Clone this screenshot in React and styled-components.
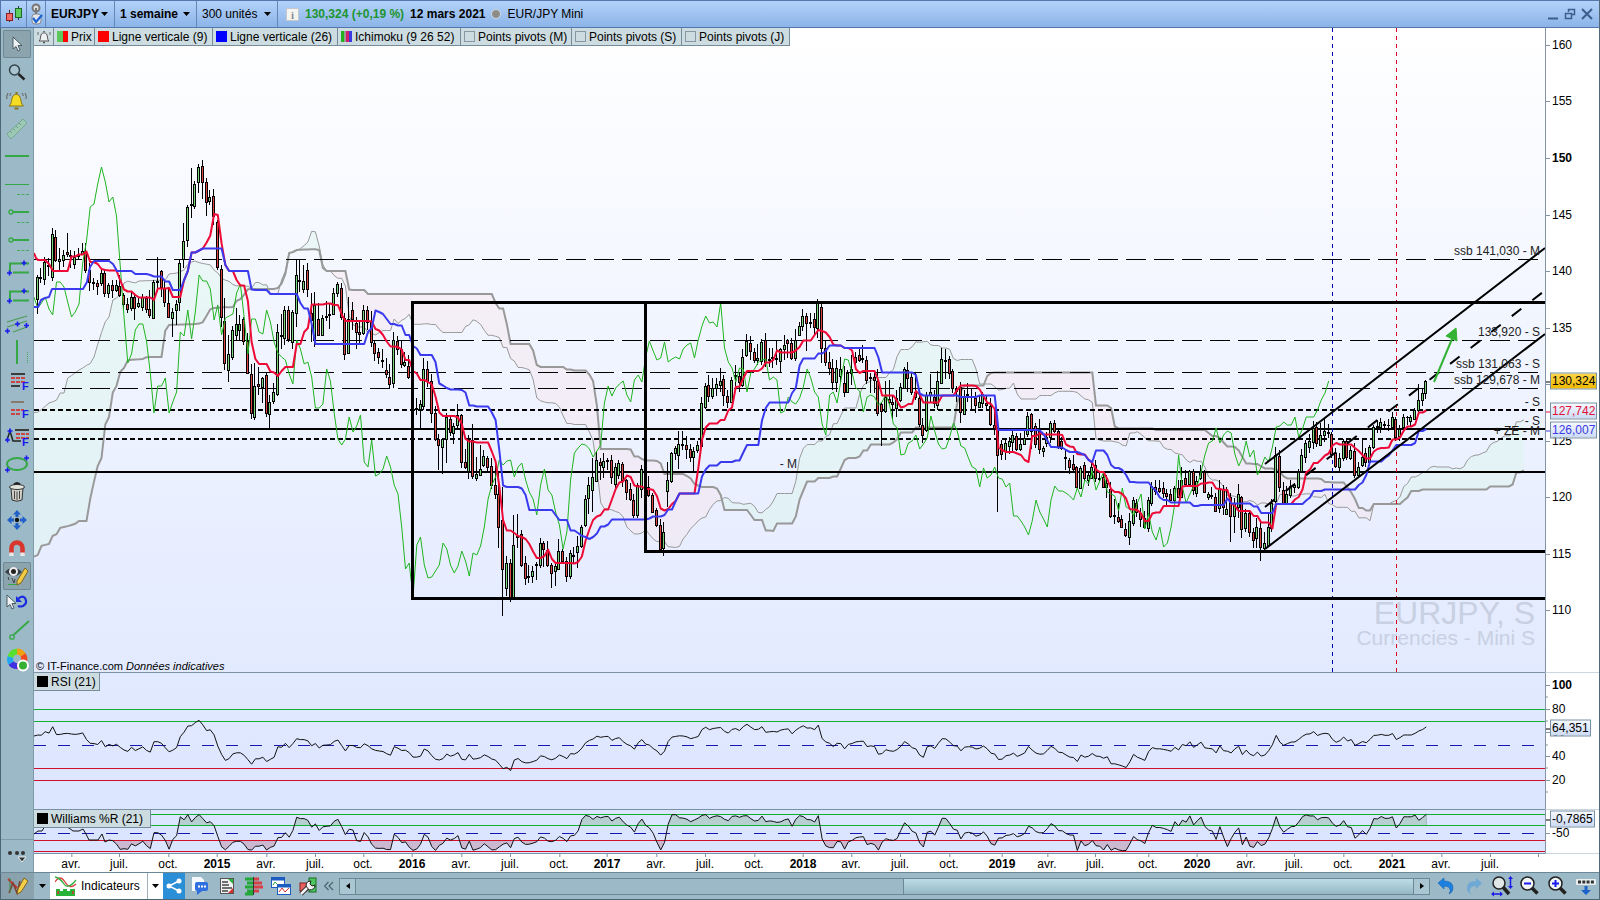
import React from 'react'
import styled, { createGlobalStyle, css } from 'styled-components'

// weekly candles: open high low close, as y positions on the price panel
const WEEKS = `
299 275 314 277|278 268 283 277|279 257 285 262|265 258 276 266|277 228 281 234|237 230 262 260|261 248 271 259|260 250 267 255|252 233 257 254|255 250 268 256
264 251 269 257|256 248 260 255|254 243 255 251|251 243 273 270|270 263 291 282|282 278 290 283|283 280 295 286|283 270 286 273|273 270 297 293|293 283 298 285
285 280 298 290|290 280 292 285|286 275 297 295|295 293 309 304|304 298 313 309|308 292 311 297|297 294 320 308|306 297 308 303|307 294 311 297|298 296 313 309
309 290 318 315|318 280 319 282|281 257 292 282|271 270 297 287|288 280 307 302|303 287 317 317|318 308 337 312|310 300 325 304|302 260 311 263|259 223 268 241
240 205 247 207|205 168 218 204|206 181 209 184|182 164 193 167|166 160 199 182|182 178 216 202|201 190 205 197|196 189 225 216|222 220 270 267|269 265 327 317
321 298 370 363|370 335 382 354|357 326 360 330|335 308 341 324|330 315 340 324|319 317 345 341|341 333 374 373|374 364 419 413|417 363 420 386|384 367 395 386
387 377 403 378|375 373 417 413|414 395 428 402|401 383 404 392|394 324 396 332|335 314 349 336|338 306 345 310|310 306 342 339|342 310 349 312|313 260 327 275
280 260 292 281|289 265 293 281|270 263 297 289|313 293 342 320|340 292 347 305|319 303 336 335|335 315 336 318|317 301 321 316|315 303 329 314|314 288 315 293
293 282 297 284|288 283 320 317|318 313 360 354|353 297 354 319|310 302 330 319|323 317 349 332|332 322 344 334|333 305 335 310|310 306 330 322|321 311 347 342
343 341 361 353|352 348 364 357|361 349 368 360|370 358 378 374|377 364 388 384|383 332 388 340|341 336 355 349|349 341 368 364|365 352 367 362|366 355 379 377
378 365 410 408|409 398 415 408|409 400 428 404|406 358 410 369|369 361 387 381|381 374 423 413|413 406 441 439|439 434 470 445|447 438 474 439|439 413 463 417
419 416 436 432|433 423 444 426|425 404 428 415|415 414 468 462|462 449 469 467|471 435 479 440|440 424 479 476|478 457 481 474|475 445 476 469|465 450 467 456
458 456 472 467|466 458 489 485|485 462 499 494|494 472 548 527|520 487 616 569|588 556 596 563|563 559 602 597|597 515 598 545|536 514 548 537|534 530 567 565
563 556 585 578|576 565 583 577|576 566 583 571|564 562 580 565|565 538 568 543|543 541 567 549|550 541 567 565|565 563 588 573|571 563 586 566|569 539 570 551
551 549 563 561|561 557 582 576|576 550 579 553|556 547 563 555|552 536 568 546|546 525 548 527|525 495 527 499|498 477 514 485|490 458 512 477|481 451 482 460
462 458 480 465|467 453 478 461|461 458 470 460|460 455 484 477|484 463 489 467|475 460 479 463|464 462 487 480|480 479 500 492|489 483 501 499|500 494 518 515
515 483 518 485|489 465 498 469|470 468 500 490|487 476 497 495|495 493 513 512|510 508 527 525|525 519 552 549|548 522 556 532|491 462 507 480|481 452 483 453
453 446 460 448|455 431 469 444|444 431 450 445|445 436 459 449|449 444 462 457|457 447 472 451|450 441 453 445|446 397 447 403|407 383 409 386|385 375 402 396
396 378 399 388|388 378 396 384|385 368 392 381|379 375 406 395|396 390 408 402|402 377 403 380|376 365 388 375|376 373 392 382|385 349 387 357|355 334 357 341
343 336 360 351|352 348 363 360|360 344 365 358|361 339 365 342|340 333 367 362|360 348 367 359|358 348 368 357|358 341 365 359|361 348 372 349|349 335 360 345
340 339 358 343|343 338 360 358|358 329 361 340|335 322 336 326|326 309 331 316|316 313 351 323|323 313 328 322|319 313 334 327|328 299 338 303|307 304 363 348
348 341 366 362|362 352 375 368|368 359 390 382|382 360 392 368|376 357 383 369|383 366 397 392|392 370 393 373|373 355 385 369|357 352 369 362|355 349 362 360
358 345 363 359|360 356 384 380|378 373 393 377|377 370 393 380|381 369 416 413|404 402 446 411|411 381 413 397|399 380 405 402|402 395 420 404|408 390 417 398
400 383 402 387|388 367 389 369|370 362 392 378|377 373 395 392|392 372 400 397|398 393 427 424|425 418 443 435|430 392 432 395|395 374 403 392|397 390 408 403
405 371 410 381|383 348 384 359|361 349 379 360|359 356 379 373|371 369 393 388|388 386 402 391|387 382 423 412|414 390 415 397|394 383 402 395|396 388 410 397
398 392 413 405|407 395 408 402|403 392 408 394|403 395 410 405|406 398 426 424|425 408 435 428|428 427 512 455|444 440 460 454|451 438 460 443|446 437 454 441
442 431 452 435|436 433 451 449|449 433 451 444|444 430 445 438|434 412 437 416|414 413 449 431|426 423 448 444|431 419 454 449|451 446 457 448|443 432 447 437
437 421 443 423|423 420 433 431|431 430 449 446|441 437 450 448|457 450 470 458|460 458 474 467|464 455 473 469|467 466 488 487|488 466 489 468|465 462 481 478
480 471 486 475|478 462 479 467|465 460 482 478|478 473 481 479|477 474 488 487|487 475 498 483|489 482 518 516|515 499 524 516|517 503 523 521|519 515 528 527
529 523 537 535|537 513 545 521|523 497 526 500|503 499 517 512|513 508 527 519|518 511 529 527|528 497 532 500|503 482 506 486|487 480 495 491|488 480 493 491
488 482 498 493|493 489 505 496|494 489 501 500|500 486 502 488|488 480 498 497|497 467 498 480|478 470 485 484|484 470 487 471|471 469 495 490|493 476 497 481
478 465 480 472|472 470 493 492|497 492 500 494|495 487 499 496|497 493 512 511|508 480 513 488|489 485 515 507|514 487 515 509|497 493 542 516|516 498 533 503
507 484 518 494|497 496 538 529|528 509 532 513|513 510 537 532|532 528 548 540|538 518 548 527|528 520 561 547|548 532 552 543|545 513 547 527|528 499 532 503
501 447 503 455|456 450 492 487|490 482 505 503|503 486 505 494|495 480 498 486|487 483 493 485|487 469 489 472|471 449 473 455|457 440 463 443|447 434 453 441
442 421 449 428|427 422 447 443|445 423 446 435|435 418 442 431|432 424 438 433|434 432 458 454|453 448 468 466|467 453 471 458|458 439 461 441|441 439 460 457
458 446 460 450|451 443 478 475|475 462 477 467|465 439 467 457|453 448 467 462|462 445 463 447|447 425 449 427|427 420 433 426|427 418 433 422|424 421 430 425
425 419 431 425|427 412 430 417|419 417 441 437|436 425 441 429|427 414 429 417|417 416 425 417|421 415 426 417|419 408 420 410|410 384 412 400|400 388 406 393
393 380 399 381`
  .trim()
  .split(/[|\n]/)
  .map(w => {
    const [o, h, l, c] = w.split(' ').map(Number)
    return { o, h, l, c }
  })

// history that starts before the first candle
const TENKAN_START = [[34, 253], [36, 258], [38, 260], [45, 260], [49, 264], [53, 271], [64, 271]]
const KIJUN_START = [[34, 307], [38, 307], [41, 300], [45, 298], [49, 297], [52, 289], [83, 289], [87, 282], [90, 267], [94, 261], [109, 261], [113, 264], [117, 271], [128, 271]]
const SSA_START = [[33, 413], [38, 412], [41, 410], [49, 403], [52, 402], [56, 401], [60, 393], [64, 393], [68, 377], [71, 376], [79, 370], [83, 368], [87, 365], [90, 364], [94, 357], [100, 337], [105, 322], [109, 317], [113, 299], [117, 298], [120, 295], [124, 283], [128, 281], [131, 282], [135, 283], [139, 281], [166, 280], [169, 274], [177, 273], [184, 270], [187, 265], [191, 262], [195, 261], [200, 263], [211, 265], [214, 270], [218, 273], [221, 278], [229, 282]]
const SSB_START = [[33, 557], [38, 555], [41, 546], [49, 544], [52, 536], [56, 535], [60, 528], [68, 526], [75, 524], [79, 521], [87, 521], [90, 500], [95, 477], [98, 465], [102, 457], [103, 440], [105, 425], [109, 417], [113, 391], [116, 388], [120, 372], [124, 368], [128, 360], [143, 359], [147, 357], [162, 357], [166, 325], [198, 324], [203, 322], [211, 308], [233, 307], [237, 300], [241, 299], [248, 289], [277, 289], [282, 283], [286, 272], [289, 253], [293, 252], [296, 250], [319, 249], [322, 267], [326, 271]]
const WILLIAMS_START = [[34, 834], [38, 831], [42, 831], [45, 826], [50, 822], [69, 828], [73, 831], [79, 831], [83, 829], [86, 834], [89, 840], [98, 840], [102, 834], [105, 842], [109, 840]]

const xOf = i => 37.7 + 3.753 * i
const range = (i, n) => {
  const part = WEEKS.slice(Math.max(0, i - n + 1), i + 1)
  return [Math.min(...part.map(w => w.h)), Math.max(...part.map(w => w.l))]
}
const mid = (i, n) => {
  const [top, bottom] = range(i, n)
  return (top + bottom) / 2
}
const valueAt = (pts, x) => {
  const k = Math.max(1, pts.findIndex(p => p[0] >= x))
  const [x0, y0] = pts[k - 1]
  const [x1, y1] = pts[k]
  return y0 + ((y1 - y0) * (x - x0)) / (x1 - x0)
}
const toPath = pts => 'M' + pts.map(p => `${p[0].toFixed(1)} ${p[1].toFixed(1)}`).join('L')

const weeks = WEEKS.map((w, i) => i)
const tenkan = [...TENKAN_START, ...weeks.slice(8).map(i => [xOf(i), mid(i, 9)])]
const kijun = [...KIJUN_START, ...weeks.slice(25).map(i => [xOf(i), mid(i, 26)])]
const chikou = weeks.slice(25).map(i => [xOf(i - 26), WEEKS[i].c])

const slots = Array.from({ length: WEEKS.length + 27 }, (_, k) => k - 1)
const ssa = slots.map(s => [xOf(s), s < 51 ? valueAt(SSA_START, xOf(s)) : (mid(s - 26, 9) + mid(s - 26, 26)) / 2])
const ssb = slots.map(s => [xOf(s), s < 77 ? valueAt(SSB_START, xOf(s)) : mid(s - 26, 52)])

// one polygon for each stretch where the same span is on top
const clouds = []
let top = [ssa[0]]
let low = [ssb[0]]
for (let k = 1; k < ssa.length; k++) {
  const before = ssb[k - 1][1] - ssa[k - 1][1]
  const now = ssb[k][1] - ssa[k][1]
  if (before !== 0 && before * now <= 0) {
    const t = before / (before - now)
    const cross = [ssa[k - 1][0] + 3.753 * t, ssa[k - 1][1] + (ssa[k][1] - ssa[k - 1][1]) * t]
    clouds.push({ up: before > 0, d: toPath([...top, cross, ...low.reverse()]) })
    top = [cross]
    low = [cross]
  }
  top.push(ssa[k])
  low.push(ssb[k])
  if (k === ssa.length - 1) clouds.push({ up: now > 0, d: toPath([...top, ...low.reverse()]) })
}

let gain = 6.4
let loss = 4.6
const rsi = weeks.map(i => {
  if (i > 0) {
    const move = WEEKS[i - 1].c - WEEKS[i].c
    gain = (gain * 20 + Math.max(move, 0)) / 21
    loss = (loss * 20 + Math.max(-move, 0)) / 21
  }
  return [xOf(i), 804 - (118.5 * gain) / (gain + loss)]
})
rsi.unshift([34, 736])

const williams = [
  ...WILLIAMS_START,
  ...weeks.slice(20).map(i => {
    const [hi, lo] = range(i, 21)
    return [xOf(i), 814 + (37 * (WEEKS[i].c - hi)) / (lo - hi)]
  })
]
const lastX = xOf(WEEKS.length - 1)

const stick = fn => weeks.map(i => fn(Math.round(xOf(i)) - 0.5, WEEKS[i])).join('')
const wicks = stick((x, w) => `M${x} ${w.h}V${w.l}`)
const bodies = stick((x, w) => `M${x} ${Math.min(w.o, w.c)}V${Math.max(w.o, w.c) + 1}`)
const fillOf = up => stick((x, w) => (w.c < w.o === up && Math.abs(w.c - w.o) > 1 ? `M${x} ${Math.min(w.o, w.c) + 1}V${Math.max(w.o, w.c)}` : ''))

const PRICES = [160, 155, 150, 145, 140, 135, 130, 125, 120, 115, 110]
const LEVELS = [
  { y: 251, text: 'ssb 141,030 - M' },
  { y: 332, text: '133,920 - S' },
  { y: 364, text: 'ssb 131,063 - S' },
  { y: 380, text: 'ssb 129,678 - M' },
  { y: 402, text: '- S' },
  { y: 421, text: '- S' },
  { y: 431, text: '+ ZE - M' },
  { y: 464, text: '- M', x: 797 }
]
const DATES = [
  [71, 'avr.'], [119, 'juil.'], [168, 'oct.'], [217, '2015'], [266, 'avr.'], [315, 'juil.'], [363, 'oct.'], [412, '2016'],
  [461, 'avr.'], [510, 'juil.'], [559, 'oct.'], [607, '2017'], [656, 'avr.'], [705, 'juil.'], [754, 'oct.'], [803, '2018'],
  [851, 'avr.'], [900, 'juil.'], [949, 'oct.'], [1002, '2019'], [1047, 'avr.'], [1095, 'juil.'], [1148, 'oct.'], [1197, '2020'],
  [1246, 'avr.'], [1294, 'juil.'], [1343, 'oct.'], [1392, '2021'], [1441, 'avr.'], [1490, 'juil.'], [1538, '']
]

const pct = (v, from, size) => `${((v - from) / size) * 100}%`

function Caret() {
  return (
    <CaretMark viewBox="0 0 7 4">
      <path d="M0 0h7L3.5 4z" />
    </CaretMark>
  )
}

function Picker({ label, value, bold, width }) {
  return (
    <PickerBox $width={width} $bold={bold}>
      <select aria-label={label} defaultValue={value}>
        <option>{value}</option>
      </select>
      <Caret />
    </PickerBox>
  )
}

const Plus = ({ x, y }) => <path d={`M${x - 2.5} ${y}h5M${x} ${y - 2.5}v5`} stroke="#1a1aee" strokeWidth="1.6" />
const Steps = () => (
  <>
    <path d="M26 9.500H7V18M10 18.500H26" stroke="#35a845" strokeWidth="2" />
    <Plus x={21} y={9} />
    <Plus x={6.5} y={19} />
  </>
)
const Ray = () => (
  <>
    <circle cx="8" cy="14" r="2" stroke="#35a845" strokeWidth="1.3" />
    <path d="M10 14H26" stroke="#35a845" strokeWidth="2" />
    <path d="M14 24.500H26" stroke="#4aa85c" strokeDasharray="3 1.500" />
  </>
)
const Letter = () => (
  <text x="19" y="24" fontSize="11" fontWeight="700" fill="#1a1aee" fontFamily="Liberation Sans, sans-serif">F</text>
)
const arrow = 'v12l3-2.500 2 4.500 2-1-2-4.500h4z'

const TOOLS = [
  ['Curseur', <path d={'M10 7' + arrow} fill="#eef2f4" stroke="#4b5a62" />],
  ['Zoom', <g><circle cx="11.500" cy="12" r="5" stroke="#33434b" strokeWidth="1.500" fill="#a9c4cf" /><path d="M15.500 16l6 5.500" stroke="#222" strokeWidth="2.400" /></g>],
  ['Alarme', <g><path d="M6 20c3-1.500 2-7 4-10 1.500-2 5-2 6.500 0 2 3 1 8.500 4 10z" fill="#f6dc22" stroke="#8a7418" /><path d="M11.500 22.500h4M13.500 6v2" stroke="#8a7418" strokeWidth="2" /><path d="M5 7q-2 3-1 6M8 7q-1.500 1.500-1 3M22 7q2 3 1 6M19 7q1.500 1.500 1 3" stroke="#555" strokeWidth=".9" /></g>],
  ['Règle', <g><path d="M4 20L20 5l4 4L8 25z" fill="#9cc8b4" stroke="#74a892" /><path d="M7 17l2 2M10 14.500l2 2M13 12l2 2M16 9l2 2" stroke="#6b9f8a" /></g>],
  ['Ligne', <path d="M2 14H26" stroke="#35a845" strokeWidth="2" />],
  ['Segment horizontal', <g><path d="M2 14.500H26" stroke="#35a845" /><path d="M14 24.500H26" stroke="#4aa85c" strokeDasharray="3 1.500" /></g>],
  ['Demi-droite', <Ray />],
  ['Demi-droite 2', <Ray />],
  ['Paliers', <Steps />],
  ['Paliers 2', <Steps />],
  ['Canal', <g><path d="M4 12L24 6M4 17L24 11M10 22L24 17" stroke="#4a9c56" strokeWidth="1.200" /><Plus x={4.5} y={21} /><Plus x={14.5} y={14} /><Plus x={23.5} y={15.5} /></g>],
  ['Ligne verticale', <g><path d="M14 2V26" stroke="#35a845" strokeWidth="2" /><path d="M24.500 14V26" stroke="#4aa85c" strokeDasharray="1 1" /></g>],
  ['Fibonacci', <g><path d="M8 8H22M8 20H17" stroke="#3c3c3c" strokeWidth="2" /><path d="M8 12H22M8 16H22" stroke="#cc4444" strokeWidth="2" strokeDasharray="4 1" /><Letter /></g>],
  ['Extension', <g><path d="M8 8H21" stroke="#857a6c" strokeWidth="2" /><path d="M8 16H21M8 20H18" stroke="#cc4444" strokeWidth="2" strokeDasharray="4 1" /><Letter /></g>],
  ['Projection', <g><path d="M12 8H26" stroke="#3c3c3c" strokeWidth="2" /><path d="M13 12H26M13 16H26" stroke="#cc4444" strokeWidth="2" strokeDasharray="4 1" /><path d="M4 18l3-9 3 10h8" stroke="#222" strokeWidth="1.500" /><Plus x={7} y={9} /><Plus x={4.5} y={18} /><Letter /></g>],
  ['Ellipse', <g><ellipse cx="14" cy="14" rx="10" ry="6" stroke="#35a845" strokeWidth="2" /><Plus x={23.5} y={8} /><Plus x={4.5} y={20} /></g>],
  ['Supprimer', <g><path d="M8 10l1 12q5 2.500 10 0l1-12z" fill="#cfcfc8" stroke="#333" /><ellipse cx="14" cy="9" rx="7.500" ry="2.500" fill="#e3e3dd" stroke="#333" /><path d="M11 6.500q3-3 6 0" stroke="#222" strokeWidth="1.800" /><path d="M11.500 13v8M14 13.500v8.500M16.500 13v8" stroke="#444" /></g>],
  ['Déplacer', <g><path d="M14 4l4 4.500h-2.500V11h-3V8.500H10zM14 24l4-4.500h-2.500V17h-3v2.500H10zM4 14l4.500-4v2.500H11v3H8.500V18zM24 14l-4.500-4v2.500H17v3h2.500V18z" fill="#2060c8" /><circle cx="14" cy="14" r="2.200" fill="#111" /></g>],
  ['Aimant', <g><path d="M8.500 20v-6a5.500 5.500 0 0 1 11 0v6" stroke="#d8352c" strokeWidth="4.500" /><path d="M8.500 18.500v3.500M19.500 18.500v3.500" stroke="#e8e8e8" strokeWidth="4.500" /></g>],
  ['Afficher les dessins', <g><path d="M2 10q8-9 17 0-8 8-17 0z" fill="#33404a" /><circle cx="10.500" cy="9.500" r="4.500" fill="#eee" /><circle cx="10.500" cy="9.500" r="2.500" fill="#222" /><path d="M5 15l1 3M9 16l2 5 1-4" stroke="#444" /><path d="M5 22.500h10" stroke="#35a845" /><path d="M22 6l3 3-7 12-4 2 0-4z" fill="#f3cb45" stroke="#7d6420" /></g>],
  ['Annuler la sélection', <g><path d={'M4 5' + arrow} fill="#eef2f4" stroke="#4b5a62" /><path d="M15 9q4-4 7-1 3 5-2 8-3 1-5 0" stroke="#1a2be0" strokeWidth="2.200" /><path d="M13 6v6h6z" fill="#1a2be0" /></g>],
  ['Segment', <g><circle cx="9" cy="19" r="2.200" stroke="#35a845" strokeWidth="1.300" /><path d="M10.500 17L26 3" stroke="#35a845" strokeWidth="1.800" /></g>],
  ['Couleur', (
    <g strokeWidth="6">
      <path d="M14 5.500a7 7 0 0 1 6 3.500" stroke="#f0a010" />
      <path d="M20 9a7 7 0 0 1 0 8" stroke="#f04a20" />
      <path d="M20 17a7 7 0 0 1-6 3" stroke="#e02080" />
      <path d="M14 20a7 7 0 0 1-6-3" stroke="#4030e0" />
      <path d="M8 17a7 7 0 0 1-.5-6" stroke="#20a8f0" />
      <path d="M7.500 11a7 7 0 0 1 6.500-5.500" stroke="#58e030" />
      <circle cx="20" cy="19.500" r="5" fill="#35b035" stroke="#fff" strokeWidth="2" />
    </g>
  )]
]

const BellIcon = () => (
  <svg width="14" height="14" viewBox="0 0 14 14" fill="none">
    <path d="M2 11c2-1 1-5 2.500-7 1-1.500 4-1.500 5 0C11 6 10 10 12 11z" fill="#eef2f3" stroke="#555" />
    <path d="M6 12.500h2M7 1v1" stroke="#555" strokeWidth="1.500" />
    <path d="M1 2v3M13 2v3" stroke="#666" />
  </svg>
)

const Lens = ({ sign }) => (
  <svg width="22" height="22" viewBox="0 0 22 22" fill="none">
    <path d="M12.500 12.500l6 6" stroke="#222" strokeWidth="3.500" />
    <circle cx="8.500" cy="8.500" r="6.500" fill="#f2f5f6" stroke="#222" strokeWidth="1.500" />
    <path d={sign} stroke="#1a1aee" strokeWidth="2" />
  </svg>
)

function PriceChart() {
  return (
    <Canvas viewBox="34 28 1511 644" preserveAspectRatio="none">
      {clouds.map((c, i) => <path key={i} d={c.d} fill={c.up ? 'rgba(215,246,228,.35)' : 'rgba(248,228,232,.4)'} />)}
      <path d={toPath(ssa)} stroke="#999" />
      <path d={toPath(ssb)} stroke="#999" strokeWidth="2" />
      <g shapeRendering="crispEdges" stroke="#000">
        <path d="M34 259.500H1539M34 340.500H1545M34 372.500H1545M34 388.500H1545" strokeDasharray="20 8" />
        <path d="M34 410H1545M34 439H1545" strokeWidth="2" strokeDasharray="5 3" />
        <path d="M34 429H1545M34 472H1545" strokeWidth="2" />
        <path d="M1332.500 28V672" stroke="#0000b8" strokeDasharray="4 4" />
        <path d="M1396.500 28V672" stroke="#d8001c" strokeDasharray="4 4" />
        <path d={wicks} />
        <path d={bodies} strokeWidth="3" />
        <path d={fillOf(true)} stroke="#7ad67a" />
        <path d={fillOf(false)} stroke="#dd4444" />
      </g>
      <path d={toPath(chikou)} stroke="#1fb51f" />
      <path d={toPath(tenkan)} stroke="#ee0a36" strokeWidth="2" strokeLinejoin="round" />
      <path d={toPath(kijun)} stroke="#3a3aee" strokeWidth="2" strokeLinejoin="round" />
      <path d="M1545 302.500H412.500V598.500H1545M645.500 302.500V551.500H1545" stroke="#000" strokeWidth="3" shapeRendering="crispEdges" />
      <path d="M1265 464L1545 248M1265 549L1545 334" stroke="#000" strokeWidth="2" />
      <path d="M1265 507L1543 292" stroke="#000" strokeWidth="2" strokeDasharray="12 14" />
      <path d="M1434 382L1452 339" stroke="#33b233" strokeWidth="2" />
      <path d="M1456 328L1446 336L1457 341Z" fill="#33b233" stroke="#33b233" />
    </Canvas>
  )
}

function RsiChart() {
  return (
    <Canvas viewBox="34 673 1511 136" preserveAspectRatio="none">
      <g shapeRendering="crispEdges">
        <path d="M34 709.500H1545M34 721.500H1545" stroke="#12b032" />
        <path d="M34 768.500H1545M34 780.500H1545" stroke="#d01028" />
        <path d="M34 745.500H1545" stroke="#1818b0" strokeDasharray="12 12" />
      </g>
      <path d={toPath(rsi)} stroke="#111" />
    </Canvas>
  )
}

function WilliamsChart() {
  const line = toPath(williams)
  return (
    <Canvas viewBox="34 810 1511 43" preserveAspectRatio="none">
      <clipPath id="over"><rect x="34" y="810" width="1511" height="15" /></clipPath>
      <clipPath id="under"><rect x="34" y="840" width="1511" height="13" /></clipPath>
      <path d={`${line}V825H34Z`} fill="rgba(130,175,140,.4)" clipPath="url(#over)" />
      <path d={`${line}V840H34Z`} fill="rgba(180,120,140,.4)" clipPath="url(#under)" />
      <g shapeRendering="crispEdges">
        <path d="M34 814.500H1545M34 825.500H1545" stroke="#12b032" />
        <path d="M34 840.500H1545M34 851.500H1545" stroke="#d01028" />
        <path d="M34 833.500H1545" stroke="#1818b0" strokeDasharray="12 12" />
      </g>
      <path d={line} stroke="#111" />
      <path d={`M${lastX} 815V825`} stroke="#9db8b8" />
    </Canvas>
  )
}

export default function App() {
  return (
    <Screen>
      <Global />
      <TitleBar>
        <TitleCell $width={26}>
          <svg width="18" height="20" viewBox="0 0 18 20">
            <path d="M4.500 6v12M13.500 2v14" stroke="#333" />
            <rect x="1.500" y="9.500" width="6" height="7" fill="#f06a6a" stroke="#8a2020" />
            <rect x="10.500" y="4.500" width="6" height="9" fill="#5ccc5c" stroke="#1c6a24" />
          </svg>
        </TitleCell>
        <TitleCell $width={19}>
          <svg width="14" height="22" viewBox="0 0 14 22" fill="none">
            <circle cx="7" cy="5" r="3.500" stroke="#777" strokeWidth="2" fill="#ddd" />
            <path d="M7 5v9" stroke="#777" strokeWidth="2" />
            <rect x="3" y="11" width="9" height="10" rx="3" fill="#dfe6ee" stroke="#888" />
            <path d="M4 15l3 4 6-7" stroke="#1c62d0" strokeWidth="2.200" />
          </svg>
        </TitleCell>
        <Picker label="Valeur" value="EURJPY" bold width={69} />
        <Picker label="Période" value="1 semaine" bold width={82} />
        <Picker label="Historique" value="300 unités" width={81} />
        <Quote>
          <Info>i</Info>
          <Change>130,324 (+0,19 %)</Change>
          <b>12 mars 2021</b>
          <Dot />
          <span>EUR/JPY Mini</span>
        </Quote>
        <WindowButtons>
          <button aria-label="Réduire"><svg viewBox="0 0 12 12"><path d="M1 10.500h10" strokeWidth="2" /></svg></button>
          <button aria-label="Restaurer"><svg viewBox="0 0 12 12"><path d="M4.500 4V1.500h6v5H8M1.500 5.500h6v5h-6z" strokeWidth="1.500" /></svg></button>
          <button aria-label="Fermer"><svg viewBox="0 0 12 12"><path d="M1 1l10 10M11 1L1 11" strokeWidth="2" /></svg></button>
        </WindowButtons>
      </TitleBar>

      <Body>
        <SideBar>
          <Tools>
            {TOOLS.map(([name, icon], i) => (
              <Tool key={name} aria-label={name} $active={i === 0 || i === 19}>
                <svg width="28" height="28" viewBox="0 0 28 28" fill="none">{icon}</svg>
              </Tool>
            ))}
          </Tools>
          <More aria-label="Plus d'outils">
            <svg width="20" height="14" viewBox="0 0 20 14" fill="#333">
              <circle cx="3" cy="4" r="2" /><circle cx="10" cy="4" r="2" /><circle cx="16" cy="4" r="2" />
              <path d="M11 8h8l-4 5z" stroke="#e6eef0" />
            </svg>
          </More>
        </SideBar>

        <Charts>
          <Panels>
            <Panel $share={645}>
              <Plot>
                <Watermark>
                  <big>EURJPY, S</big>
                  <span>Currencies - Mini S</span>
                </Watermark>
                <PriceChart />
                {LEVELS.map(l => (
                  <Level key={l.y} style={{ top: pct(l.y, 28, 644), right: pct(1545 - (l.x || 1540), 0, 1511) }}>{l.text}</Level>
                ))}
                <Legend>
                  <LegendItem $width={20}><BellIcon /></LegendItem>
                  <LegendItem $width={41}><Swatch $paint="linear-gradient(90deg, #5cc85c 50%, #f00 50%)" />Prix</LegendItem>
                  <LegendItem $width={118}><Swatch $paint="#f00" />Ligne verticale (9)</LegendItem>
                  <LegendItem $width={125}><Swatch $paint="#00f" />Ligne verticale (26)</LegendItem>
                  <LegendItem $width={123}><Swatch $paint="linear-gradient(90deg, #1eb41e 30%, #999 30% 50%, #d0206c 50% 70%, #3a3ae0 70%)" />Ichimoku (9 26 52)</LegendItem>
                  <LegendItem $width={111}><Swatch $empty />Points pivots (M)</LegendItem>
                  <LegendItem $width={110}><Swatch $empty />Points pivots (S)</LegendItem>
                  <LegendItem $width={108}><Swatch $empty />Points pivots (J)</LegendItem>
                </Legend>
                <Source>© IT-Finance.com <i>Données indicatives</i></Source>
              </Plot>
              <Axis>
                {PRICES.map(p => (
                  <Mark key={p} $bold={p === 150} style={{ top: pct(45 + (160 - p) * 11.3, 28, 644) }}>{p}</Mark>
                ))}
                <Tag $gold style={{ top: pct(381, 28, 644) }}>130,324</Tag>
                <Tag $color="#e01038" style={{ top: pct(411, 28, 644) }}>127,742</Tag>
                <Tag $color="#3a3ae6" style={{ top: pct(430, 28, 644) }}>126,007</Tag>
              </Axis>
            </Panel>

            <Panel $share={137}>
              <Plot>
                <RsiChart />
                <Legend>
                  <LegendItem $width={66}><Swatch $paint="#000" />RSI (21)</LegendItem>
                </Legend>
              </Plot>
              <Axis>
                {[100, 90, 80, 70, 60, 50, 40, 30, 20, 10].map(v => (
                  <Mark key={v} $minor={v % 20 !== 0} $bold={v === 100} style={{ top: pct(803.5 - v * 1.185, 673, 136) }}>{v % 20 ? '' : v}</Mark>
                ))}
                <Tag style={{ top: pct(728, 673, 136) }}>64,351</Tag>
              </Axis>
            </Panel>

            <Panel $share={44}>
              <Plot>
                <WilliamsChart />
                <Legend>
                  <LegendItem $width={117}><Swatch $paint="#000" />Williams %R (21)</LegendItem>
                </Legend>
              </Plot>
              <Axis>
                <Mark style={{ top: pct(833, 810, 43) }}>-50</Mark>
                <Tag style={{ top: pct(819, 810, 43) }}>-0,7865</Tag>
              </Axis>
            </Panel>
          </Panels>

          <TimeRow>
            <TimeAxis>
              {DATES.map(([x, text]) => (
                <DateMark key={x} $bold={text.startsWith('20')} style={{ left: pct(x, 34, 1511) }}>{text}</DateMark>
              ))}
            </TimeAxis>
          </TimeRow>
        </Charts>
      </Body>

      <BottomBar>
        <DrawButton aria-label="Dessiner">
          <svg width="22" height="20" viewBox="0 0 22 20" fill="none">
            <path d="M1 3l9 9" stroke="#d03030" strokeWidth="2" />
            <path d="M2 17l4-10 4 10 3-12" stroke="#7a4030" strokeWidth="1.500" />
            <path d="M3 2v14" stroke="#3a8a44" />
            <path d="M17 2l4 3-7 11-4 2 1-5z" fill="#f4cf4a" stroke="#7d6420" />
          </svg>
        </DrawButton>
        <SmallDrop aria-label="Options de dessin"><Caret /></SmallDrop>
        <Indicators>
          <svg width="22" height="20" viewBox="0 0 22 20" fill="none">
            <path d="M0 6q5-8 10 0t11 2" stroke="#e04040" strokeWidth="1.300" />
            <path d="M0 1q5 1 9 7t12-4" stroke="#30b040" strokeWidth="1.300" />
            <path d="M1 13h4v2h3v-2h4v2h3v-2h5v7H1z" fill="#28b438" />
            <path d="M3 15v3M18 15v3" stroke="#d83030" strokeWidth="1.500" />
          </svg>
          Indicateurs
        </Indicators>
        <SmallDrop $white aria-label="Liste des indicateurs"><Caret /></SmallDrop>
        <Share aria-label="Partager">
          <svg width="16" height="16" viewBox="0 0 16 16" fill="#fff">
            <path d="M13 3L3 8l10 5" stroke="#fff" strokeWidth="1.500" fill="none" />
            <circle cx="13" cy="3" r="2.500" /><circle cx="3" cy="8" r="2.500" /><circle cx="13" cy="13" r="2.500" />
          </svg>
        </Share>
        <Shortcuts>
          <button aria-label="Messages">
            <svg width="18" height="20" viewBox="0 0 18 20"><path d="M1 1h9l3 3v11H1z" fill="#f6f9fb" /><rect x="4" y="6" width="13" height="9" rx="2" fill="#2f6fe0" /><path d="M6 14v5l5-4z" fill="#2f6fe0" /><path d="M7 10.500h8" stroke="#fff" strokeWidth="2" strokeDasharray="2 1" /></svg>
          </button>
          <button aria-label="Actualités">
            <svg width="16" height="20" viewBox="0 0 16 20"><rect x="1.500" y="2.500" width="13" height="15" fill="#f2f2f2" stroke="#555" /><path d="M3 6h6M3 9h7M3 12h10M3 15h6" stroke="#444" strokeWidth="1.500" /><path d="M9 3h5v5z" fill="#28b438" /><path d="M9 17h5v-5z" fill="#d83030" /></svg>
          </button>
          <button aria-label="Carnet d'ordres">
            <svg width="20" height="20" viewBox="0 0 20 20"><path d="M1 3h8M3 7h6M1 11h8M3 15h6M1 18h8" stroke="#22a838" strokeWidth="3" /><path d="M10 3h5M10 7h8M10 11h9M10 15h5" stroke="#d84048" strokeWidth="3" /><path d="M9.500 1v18" stroke="#333" /></svg>
          </button>
          <button aria-label="Graphiques">
            <svg width="22" height="20" viewBox="0 0 22 20" fill="none"><rect x="1.500" y="1.500" width="13" height="10" fill="#fff" stroke="#1c5cc0" /><path d="M1 3h14" stroke="#1c5cc0" strokeWidth="3" /><rect x="7.500" y="8.500" width="13" height="10" fill="#fff" stroke="#1c5cc0" /><path d="M7 10h14" stroke="#1c5cc0" strokeWidth="3" /><path d="M3 9l2-3 2 2" stroke="#28a838" /><path d="M9 16l3-4 3 4 4-4" stroke="#d83030" /></svg>
          </button>
          <button aria-label="Outils">
            <svg width="20" height="20" viewBox="0 0 20 20"><rect x="11" y="2" width="7" height="14" fill="#4cc85c" stroke="#1c6a24" /><rect x="2" y="7" width="7" height="8" fill="#e86060" stroke="#8a2020" /><path d="M3 18l7-7" stroke="#222" strokeWidth="4.500" /><path d="M3 18l7-7" stroke="#f4f4f4" strokeWidth="2.500" /><path d="M8 10q0-5 5-5l-1 3 2 2 3-1q0 5-6 5z" fill="#f4f4f4" stroke="#222" /></svg>
          </button>
        </Shortcuts>
        <Collapse aria-label="Replier">
          <svg width="10" height="10" viewBox="0 0 10 10" fill="none"><path d="M4.500 1l-4 4 4 4M9 1L5 5l4 4" stroke="#4a6472" strokeWidth="1.200" /></svg>
        </Collapse>
        <Scroll role="scrollbar" aria-controls="root" aria-valuenow={100}>
          <ScrollArrow aria-label="Gauche"><svg width="4" height="6" viewBox="0 0 4 6"><path d="M4 0v6L0 3z" /></svg></ScrollArrow>
          <Track />
          <Thumb />
          <ScrollArrow aria-label="Droite"><svg width="4" height="6" viewBox="0 0 4 6"><path d="M0 0v6l4-3z" /></svg></ScrollArrow>
        </Scroll>
        <ViewTools>
          <button aria-label="Annuler">
            <svg width="18" height="18" viewBox="0 0 18 18"><path d="M1 6l6-5v3q9 0 9 7 0 4-4 6 2-3 1-5-1-3-6-3v3z" fill="#1c80e0" stroke="#1460b0" strokeWidth=".6" /></svg>
          </button>
          <button aria-label="Rétablir">
            <svg width="18" height="18" viewBox="0 0 18 18"><path d="M17 6l-6-5v3q-9 0-9 7 0 4 4 6-2-3-1-5 1-3 6-3v3z" fill="#6ea8d4" /></svg>
          </button>
          <button aria-label="Ajuster">
            <svg width="22" height="22" viewBox="0 0 22 22" fill="none"><path d="M12 12l6 7" stroke="#222" strokeWidth="3.500" /><circle cx="8" cy="8" r="6" fill="#dfe6e6" stroke="#222" strokeWidth="1.500" /><path d="M19.500 3v9M2 19h8" stroke="#1a1aee" strokeWidth="1.500" /><path d="M17 4l2.500-3L22 4zM17 11l2.500 3 2.500-3zM3 16.500L0 19l3 2.500zM9 16.500l3 2.500-3 2.500z" fill="#1a1aee" /></svg>
          </button>
          <button aria-label="Zoom arrière"><Lens sign="M5 8.500h7" /></button>
          <button aria-label="Zoom avant"><Lens sign="M5 8.500h7M8.500 5v7" /></button>
          <button aria-label="Dernière barre">
            <svg width="20" height="18" viewBox="0 0 20 18"><rect x="0" y="2" width="20" height="6" rx="1" fill="#e9eef0" /><path d="M2 5h16" stroke="#333" strokeWidth="3" strokeDasharray="3 1.300" /><path d="M8.500 9h3v4H15l-5 5-5-5h3.500z" fill="#1c62c8" /></svg>
          </button>
        </ViewTools>
      </BottomBar>
    </Screen>
  )
}

const Global = createGlobalStyle`
  * { box-sizing: border-box; }
  body {
    margin: 0;
    font: 12px/14px "Liberation Sans", Arial, sans-serif;
    color: #000;
  }
  button, select {
    font: inherit;
    color: inherit;
    background: none;
    border: 0;
    border-radius: 0;
    padding: 0;
    margin: 0;
    cursor: pointer;
  }
  svg { display: block; }
`

const Screen = styled.div`
  display: flex;
  flex-direction: column;
  height: 100vh;
  overflow: hidden;
  background: #9bb9c6;
  border-right: 1px solid #50687a;
`

const TitleBar = styled.header`
  display: flex;
  flex: none;
  height: 28px;
  border-top: 1px solid #5478ac;
  border-bottom: 1px solid #5478ac;
  border-left: 1px solid #5478ac;
  background: linear-gradient(#b2d2fa, #8cb4e8);
`

const TitleCell = styled.div`
  display: flex;
  align-items: center;
  justify-content: center;
  width: ${p => p.$width}px;
  border-right: 1px solid #6486b6;
`

const PickerBox = styled.label`
  display: flex;
  align-items: center;
  justify-content: space-between;
  width: ${p => p.$width}px;
  padding: 0 6px 0 5px;
  border-right: 1px solid #6486b6;
  font-weight: ${p => (p.$bold ? 700 : 400)};
  select {
    appearance: none;
    outline: none;
  }
`

const CaretMark = styled.svg`
  width: 7px;
  height: 4px;
  flex: none;
  pointer-events: none;
`

const Quote = styled.div`
  display: flex;
  align-items: center;
  gap: 6px;
  padding-left: 8px;
`

const Info = styled.span`
  width: 13px;
  height: 13px;
  background: #f4f4f0;
  border: 1px solid #c4c8cc;
  color: #8a8a8a;
  font: 700 11px/12px "Liberation Serif", serif;
  text-align: center;
`

const Change = styled.b`
  color: #1c9430;
`

const Dot = styled.span`
  width: 10px;
  height: 10px;
  border-radius: 50%;
  background: #8c8c88;
  border: 1px solid #d4dce4;
`

const WindowButtons = styled.div`
  display: flex;
  align-items: center;
  gap: 5px;
  margin-left: auto;
  padding-right: 6px;
  svg {
    width: 12px;
    height: 12px;
    fill: none;
    stroke: #3c5c8c;
  }
`

const Body = styled.div`
  display: flex;
  flex: 1;
  min-height: 0;
`

const SideBar = styled.aside`
  display: flex;
  flex-direction: column;
  flex: none;
  width: 34px;
  border-left: 1px solid #4c6676;
  border-right: 1px solid #7f9ba8;
`

const Tools = styled.div`
  flex: 1;
  min-height: 0;
  overflow: hidden;
  padding: 2px 2px 0;
`

const Tool = styled.button`
  display: block;
  width: 28px;
  height: 28px;
  ${p => p.$active && css`
    background: #8ca4ae;
    box-shadow: inset 0 0 0 1px #6f8894;
    border-radius: 2px;
  `}
`

const More = styled.button`
  display: flex;
  justify-content: center;
  align-items: center;
  height: 33px;
  border-top: 1px solid #7f9ba8;
`

const Charts = styled.main`
  display: flex;
  flex-direction: column;
  flex: 1;
  min-width: 0;
  background: #fff;
`

const Panels = styled.div`
  display: flex;
  flex-direction: column;
  flex: 1;
  min-height: 0;
  background: linear-gradient(#fff, #dae4ff);
`

const Panel = styled.section`
  display: flex;
  flex: ${p => p.$share} 1 0;
  min-height: 0;
`

const Plot = styled.div`
  position: relative;
  flex: 1;
  border-bottom: 1px solid #7a90a4;
`

const Canvas = styled.svg`
  position: absolute;
  inset: 0;
  width: 100%;
  height: 100%;
  fill: none;
`

const Legend = styled.div`
  position: absolute;
  top: 0;
  left: 0;
  display: flex;
`

const LegendItem = styled.button`
  display: flex;
  align-items: center;
  gap: 3px;
  width: ${p => p.$width}px;
  height: 18px;
  padding: 0 0 0 3px;
  background: #cddce0;
  border-right: 1px solid #768c9a;
  border-bottom: 1px solid #768c9a;
  white-space: nowrap;
`

const Swatch = styled.span`
  flex: none;
  width: 11px;
  height: 11px;
  background: ${p => p.$paint || 'none'};
  border: ${p => (p.$empty ? '1px solid #8798a2' : '0')};
`

const Level = styled.span`
  position: absolute;
  transform: translateY(-50%);
  white-space: nowrap;
  color: #222;
`

const Watermark = styled.div`
  position: absolute;
  right: 10px;
  bottom: 22px;
  display: flex;
  flex-direction: column;
  align-items: flex-end;
  color: #c8d0e2;
  font-size: 21px;
  line-height: 24px;
  big {
    font-size: 32px;
    line-height: 26px;
  }
`

const Source = styled.p`
  position: absolute;
  left: 2px;
  bottom: 0;
  margin: 0;
  font-size: 11px;
  line-height: 12px;
`

const Axis = styled.div`
  position: relative;
  flex: none;
  width: 54px;
  background: #fff;
  border-left: 1px solid #8494a4;
  border-bottom: 1px solid #ccd6de;
`

const Mark = styled.span`
  position: absolute;
  left: 0;
  padding-left: 6px;
  min-height: 1px;
  font-weight: ${p => (p.$bold ? 700 : 400)};
  transform: translateY(-50%);
  &::before {
    content: '';
    position: absolute;
    left: 0;
    top: 50%;
    width: ${p => (p.$minor ? 2 : 4)}px;
    height: 1px;
    background: #8494a4;
  }
`

const Tag = styled.span`
  position: absolute;
  left: 4px;
  padding: 0 1px;
  border: 1px solid #7890a4;
  line-height: 15px;
  color: ${p => p.$color || '#000'};
  background: ${p => (p.$gold ? 'linear-gradient(#fcd64c, #f0b800)' : 'linear-gradient(#f6f9ff, #ccdaf4)')};
  transform: translateY(-50%);
  &::before {
    content: '';
    position: absolute;
    left: -5px;
    top: 50%;
    width: 4px;
    height: 1px;
    background: ${p => p.$color || '#000'};
  }
`

const TimeRow = styled.div`
  display: flex;
  flex: none;
  height: 18px;
  padding-right: 54px;
`

const TimeAxis = styled.div`
  position: relative;
  flex: 1;
`

const DateMark = styled.span`
  position: absolute;
  top: 3px;
  font-weight: ${p => (p.$bold ? 700 : 400)};
  transform: translateX(-50%);
  &::before {
    content: '';
    position: absolute;
    left: 50%;
    top: -3px;
    width: 1px;
    height: 3px;
    background: #7a90a4;
  }
`

const BottomBar = styled.footer`
  display: flex;
  flex: none;
  align-items: stretch;
  height: 28px;
  border-top: 1px solid #6c8896;
  border-bottom: 1px solid #4c6676;
  border-left: 1px solid #4c6676;
`

const DrawButton = styled.button`
  display: flex;
  align-items: center;
  justify-content: center;
  width: 33px;
  background: #8aa2ae;
`

const SmallDrop = styled.button`
  display: flex;
  align-items: center;
  justify-content: center;
  width: 16px;
  background: ${p => (p.$white ? '#fff' : 'none')};
  border-left: ${p => (p.$white ? '1px solid #9bb0ba' : '0')};
`

const Indicators = styled.button`
  display: flex;
  align-items: center;
  gap: 4px;
  width: 97px;
  padding-left: 5px;
  background: #fff;
`

const Share = styled.button`
  display: flex;
  align-items: center;
  justify-content: center;
  width: 22px;
  background: #2b8fd8;
`

const Shortcuts = styled.div`
  display: flex;
  padding-left: 1px;
  button {
    display: flex;
    align-items: center;
    justify-content: center;
    width: 27px;
  }
`

const Collapse = styled.button`
  display: flex;
  align-items: center;
  justify-content: center;
  width: 16px;
`

const Scroll = styled.div`
  display: flex;
  flex: 1;
  align-self: center;
  height: 17px;
  margin: 0 2px;
  border: 1px solid #6c8896;
`

const ScrollArrow = styled.button`
  display: flex;
  align-items: center;
  justify-content: center;
  width: 15px;
  background: #a9c6d2;
`

const Track = styled.div`
  flex: 549;
  border-left: 1px solid #6c8896;
`

const Thumb = styled.div`
  flex: 511;
  border-left: 1px solid #6c8896;
  border-right: 1px solid #6c8896;
  background: linear-gradient(#bcdde8, #96b8c6);
`

const ViewTools = styled.div`
  display: flex;
  margin-right: -1px;
  button {
    display: flex;
    align-items: center;
    justify-content: center;
    width: 28px;
  }
`
